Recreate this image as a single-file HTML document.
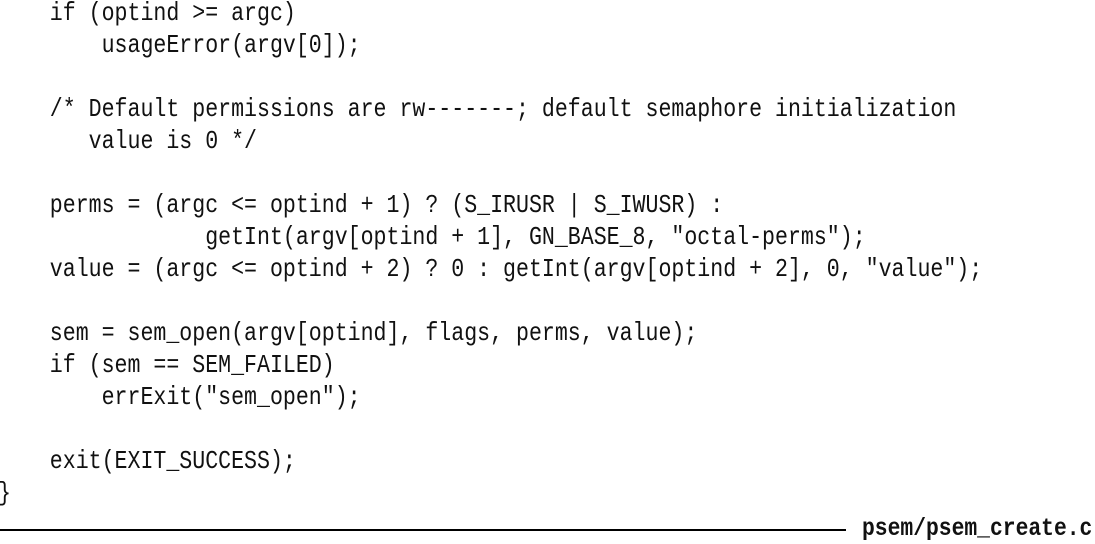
<!DOCTYPE html>
<html><head><meta charset="utf-8"><style>
html,body{margin:0;padding:0;background:#fff;width:1095px;height:544px;overflow:hidden;position:relative}
pre{position:absolute;left:-2px;top:-3px;margin:0;font-family:"Liberation Mono",monospace;font-size:26px;line-height:32px;color:#111;transform:scaleX(0.83);transform-origin:0 0}
.rule{position:absolute;left:0;top:529px;width:846px;height:2px;background:#000}
.fn{position:absolute;left:862px;top:513px;font-family:"Liberation Mono",monospace;font-weight:bold;font-size:25px;line-height:32px;color:#111;transform:scaleX(0.853);transform-origin:0 0;white-space:nowrap}
</style></head><body>
<pre>    if (optind &gt;= argc)
        usageError(argv[0]);

    /* Default permissions are rw-------; default semaphore initialization
       value is 0 */

    perms = (argc &lt;= optind + 1) ? (S_IRUSR | S_IWUSR) :
                getInt(argv[optind + 1], GN_BASE_8, "octal-perms");
    value = (argc &lt;= optind + 2) ? 0 : getInt(argv[optind + 2], 0, "value");

    sem = sem_open(argv[optind], flags, perms, value);
    if (sem == SEM_FAILED)
        errExit("sem_open");

    exit(EXIT_SUCCESS);
}</pre>
<div class="rule"></div>
<div class="fn">psem/psem_create.c</div>
</body></html>
